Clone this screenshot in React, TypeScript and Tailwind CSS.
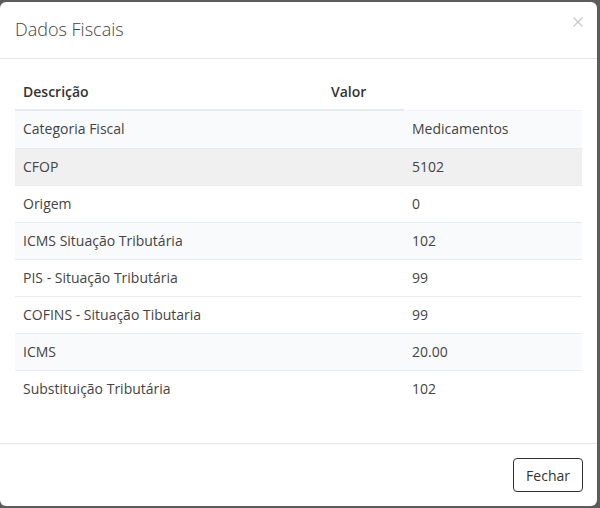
import React from 'react';

const rows = [
  { label: 'Categoria Fiscal', value: 'Medicamentos', bg: 'bg-[#f9fafc]' },
  { label: 'CFOP', value: '5102', bg: 'bg-[#f0f0f0]' },
  { label: 'Origem', value: '0', bg: 'bg-white' },
  { label: 'ICMS Situação Tributária', value: '102', bg: 'bg-[#f9fafc]' },
  { label: 'PIS - Situação Tributária', value: '99', bg: 'bg-white' },
  { label: 'COFINS - Situação Tibutaria', value: '99', bg: 'bg-white' },
  { label: 'ICMS', value: '20.00', bg: 'bg-[#f9fafc]' },
  { label: 'Substituição Tributária', value: '102', bg: 'bg-white' },
];

export default function App() {
  return (
    <div className="w-[600px] h-[508px] bg-[#5c5c5c] pt-[2px] pr-[3px] pb-[2px] font-['Open_Sans',sans-serif]">
      <div className="relative h-full bg-white rounded-[6px] flex flex-col">
        <button className="absolute right-[14px] top-[15px] w-[10px] h-[10px] text-[#c8c8c8]">
          <svg viewBox="0 0 10 10" className="w-[10px] h-[10px]" fill="none" stroke="currentColor" strokeWidth="1.3">
            <path d="M0.5 0.5 L9.5 9.5 M9.5 0.5 L0.5 9.5" />
          </svg>
        </button>
        <div className="px-[15px] pt-[14px] pb-[16px] border-b border-[#e5e5e5]">
          <h4 className="text-[18px] leading-[26px] font-light text-[#444]">Dados Fiscais</h4>
        </div>
        <div className="px-[15px] pt-[15px] pb-[35px] text-[14px] text-[#444]">
          <div className="grid grid-cols-[389px_1fr]">
            <div className="grid grid-cols-[308px_1fr] border-b-2 border-[#e6e9ee] h-[37px] items-center pb-[1px]">
              <span className="pl-[8px] font-semibold text-[#333]">Descrição</span>
              <span className="pl-[8px] font-semibold text-[#333]">Valor</span>
            </div>
            <div className="border-b border-[#f0f2f5]" />
          </div>
          {rows.map((r, i) => (
            <div
              key={r.label}
              className={`grid grid-cols-[389px_1fr] h-[37px] items-center pb-[2px] ${r.bg} ${i > 0 ? 'border-t border-[#e9ecef]' : ''}`}
            >
              <span className="pl-[8px]">{r.label}</span>
              <span className="pl-[8px]">{r.value}</span>
            </div>
          ))}
        </div>
        <div className="mt-auto border-t border-[#e5e5e5] pl-[15px] pr-[14px] py-[14px] flex justify-end">
          <button className="h-[34px] px-[12px] border border-[#333] rounded-[4px] text-[14px] text-[#333] bg-white">
            Fechar
          </button>
        </div>
      </div>
    </div>
  );
}
